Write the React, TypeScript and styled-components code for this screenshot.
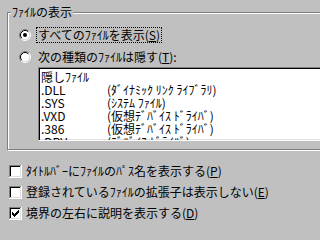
import React from "react";
import styled, { createGlobalStyle } from "styled-components";

const GlobalStyle = createGlobalStyle`
  html, body {
    margin: 0;
    padding: 0;
    background: #c0c0c0;
    overflow: hidden;
  }
  body {
    font-family: "Noto Sans CJK JP", "DejaVu Sans", sans-serif;
    font-size: 12px;
    color: #000;
  }
`;

const Page = styled.div`
  width: 100%;
  height: 100vh;
  padding: 12px 0 0 7px;
  box-sizing: border-box;
  overflow: hidden;
`;

const GroupBox = styled.div`
  position: relative;
  margin-right: -60px;
  border: 1px solid #808080;
  box-shadow: inset 1px 1px 0 #fff, 1px 1px 0 #fff;
  padding: 14px 0 8px 11px;
  display: flex;
  flex-direction: column;
`;

const Legend = styled.span`
  position: absolute;
  top: -8px;
  left: 3px;
  padding: 0 1px;
  line-height: 14px;
  background: #c0c0c0;
  white-space: nowrap;
`;

const RadioList = styled.div`
  display: flex;
  flex-direction: column;
  gap: 6px;
`;

const RadioRow = styled.div`
  display: flex;
  align-items: center;
  height: 16px;
  gap: 5px;
`;

const FocusLabel = styled.span<{ $focused?: boolean }>`
  line-height: 14px;
  padding: 0 1px;
  white-space: nowrap;
  border: 1px dotted ${(p) => (p.$focused ? "#000" : "transparent")};
`;

const ListBox = styled.div`
  margin: 2px 0 0 19px;
  height: 74px;
  box-sizing: border-box;
  border: 1px solid;
  border-color: #808080 #fff #fff #808080;
  box-shadow: inset 1px 1px 0 #000, inset -1px -1px 0 #dfdfdf;
  background: #fff;
  padding: 2px 0 0 2px;
  overflow: hidden;
`;

const ListRow = styled.div`
  display: grid;
  grid-template-columns: 66px auto;
  line-height: 13px;
  height: 13px;
  white-space: nowrap;
`;

const CheckList = styled.div`
  margin: 13px 0 0 2px;
  display: flex;
  flex-direction: column;
  gap: 5px;
`;

const CheckRow = styled.div`
  display: flex;
  align-items: center;
  height: 16px;
  gap: 4px;
  line-height: 14px;
  white-space: nowrap;
`;

const Radio = ({ checked }: { checked?: boolean }) => (
  <svg width="12" height="12" viewBox="0 0 12 12">
    <circle cx="6" cy="6" r="4.5" fill="#fff" />
    <path d="M2.11 9.89 A5.5 5.5 0 0 1 9.89 2.11" fill="none" stroke="#808080" />
    <path d="M9.89 2.11 A5.5 5.5 0 0 1 2.11 9.89" fill="none" stroke="#fff" />
    <path d="M2.82 9.18 A4.5 4.5 0 0 1 9.18 2.82" fill="none" stroke="#000" />
    <path d="M9.18 2.82 A4.5 4.5 0 0 1 2.82 9.18" fill="none" stroke="#dfdfdf" />
    {checked && <circle cx="6" cy="6" r="2" fill="#000" />}
  </svg>
);

const checkCols: [number, number][] = [
  [3, 5], [4, 6], [5, 7], [6, 6], [7, 5], [8, 4], [9, 3],
];

const Checkbox = ({ checked }: { checked?: boolean }) => (
  <svg width="13" height="13" viewBox="0 0 13 13" shapeRendering="crispEdges">
    <rect x="0" y="0" width="13" height="13" fill="#fff" />
    <rect x="0" y="0" width="12" height="1" fill="#808080" />
    <rect x="0" y="0" width="1" height="12" fill="#808080" />
    <rect x="1" y="1" width="10" height="1" fill="#000" />
    <rect x="1" y="1" width="1" height="10" fill="#000" />
    <rect x="1" y="11" width="11" height="1" fill="#dfdfdf" />
    <rect x="11" y="1" width="1" height="11" fill="#dfdfdf" />
    {checked &&
      checkCols.map(([x, y]) => (
        <rect key={x} x={x} y={y} width="1" height="3" fill="#000" />
      ))}
  </svg>
);

const hidden: [string, string][] = [
  [".DLL", "(ﾀﾞｲﾅﾐｯｸ ﾘﾝｸ ﾗｲﾌﾞﾗﾘ)"],
  [".SYS", "(ｼｽﾃﾑ ﾌｧｲﾙ)"],
  [".VXD", "(仮想ﾃﾞﾊﾞｲｽ ﾄﾞﾗｲﾊﾞ)"],
  [".386", "(仮想ﾃﾞﾊﾞｲｽ ﾄﾞﾗｲﾊﾞ)"],
  [".DRV", "(ﾃﾞﾊﾞｲｽ ﾄﾞﾗｲﾊﾞ)"],
];

export default function App() {
  return (
    <>
      <GlobalStyle />
      <Page>
        <GroupBox>
          <Legend>ﾌｧｲﾙの表示</Legend>
          <RadioList>
            <RadioRow>
              <Radio checked />
              <FocusLabel $focused>
                すべてのﾌｧｲﾙを表示(<u>S</u>)
              </FocusLabel>
            </RadioRow>
            <RadioRow>
              <Radio />
              <FocusLabel>
                次の種類のﾌｧｲﾙは隠す(<u>T</u>):
              </FocusLabel>
            </RadioRow>
          </RadioList>
          <ListBox>
            <ListRow>隠しﾌｧｲﾙ</ListRow>
            {hidden.map(([ext, desc]) => (
              <ListRow key={ext}>
                <span>{ext}</span>
                <span>{desc}</span>
              </ListRow>
            ))}
          </ListBox>
        </GroupBox>
        <CheckList>
          <CheckRow>
            <Checkbox />
            <span>
              ﾀｲﾄﾙﾊﾞｰにﾌｧｲﾙのﾊﾟｽ名を表示する(<u>P</u>)
            </span>
          </CheckRow>
          <CheckRow>
            <Checkbox />
            <span>
              登録されているﾌｧｲﾙの拡張子は表示しない(<u>E</u>)
            </span>
          </CheckRow>
          <CheckRow>
            <Checkbox checked />
            <span>
              境界の左右に説明を表示する(<u>D</u>)
            </span>
          </CheckRow>
        </CheckList>
      </Page>
    </>
  );
}
